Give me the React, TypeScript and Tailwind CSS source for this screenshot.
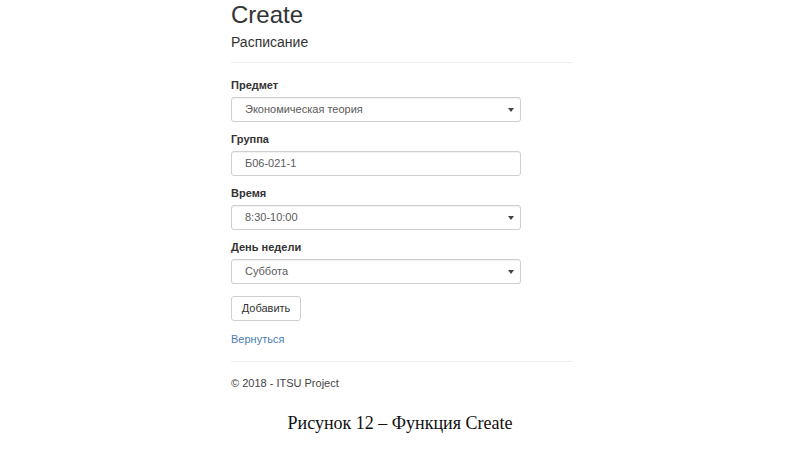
import React from "react";

function Caret() {
  return (
    <svg width="6" height="4" viewBox="0 0 6 4" className="shrink-0">
      <path d="M0 0 H6 L3 4 Z" fill="#444" />
    </svg>
  );
}

function SelectBox({ value }: { value: string }) {
  return (
    <div className="mt-[4px] flex h-[25px] w-[290px] items-center justify-between rounded-[3px] border border-[#cfcfcf] bg-white pl-[13px] pr-[6px] text-[11px] leading-[15px] text-[#5a5a5a] shadow-[inset_0_1px_1px_rgba(0,0,0,0.06)]">
      <span>{value}</span>
      <Caret />
    </div>
  );
}

function InputBox({ value }: { value: string }) {
  return (
    <div className="mt-[4px] flex h-[25px] w-[290px] items-center rounded-[3px] border border-[#cfcfcf] bg-white pl-[13px] text-[11px] leading-[15px] text-[#5a5a5a] shadow-[inset_0_1px_1px_rgba(0,0,0,0.06)]">
      <span>{value}</span>
    </div>
  );
}

function Label({ children }: { children: React.ReactNode }) {
  return <div className="h-[15px] text-[11px] font-bold leading-[15px] text-[#333]">{children}</div>;
}

export default function App() {
  return (
    <div className="h-[450px] w-[800px] overflow-hidden bg-white font-['Liberation_Sans',Arial,sans-serif]">
      <div className="ml-[231px] w-[342px]">
        <h2 className="mt-[1px] text-[24px] leading-[28px] text-[#333]">Create</h2>
        <h4 className="mt-[3px] text-[14px] leading-[20px] text-[#333]">Расписание</h4>
        <div className="mt-[10px] border-t border-[#eeeeee]" />
        <div className="mt-[15px] flex flex-col">
          <div className="mb-[10px]">
            <Label>Предмет</Label>
            <SelectBox value="Экономическая теория" />
          </div>
          <div className="mb-[10px]">
            <Label>Группа</Label>
            <InputBox value="Б06-021-1" />
          </div>
          <div className="mb-[10px]">
            <Label>Время</Label>
            <SelectBox value="8:30-10:00" />
          </div>
          <div>
            <Label>День недели</Label>
            <SelectBox value="Суббота" />
          </div>
        </div>
        <div className="mt-[12px] flex h-[25px] w-[70px] items-center justify-center rounded-[3px] border border-[#cfcfcf] bg-white text-[11px] leading-[15px] text-[#333]">
          Добавить
        </div>
        <div className="mt-[11px] text-[11px] leading-[15px] text-[#4a7db0]">Вернуться</div>
        <div className="mt-[14px] border-t border-[#eeeeee]" />
        <div className="mt-[14px] text-[11px] leading-[15px] text-[#444]">© 2018 - ITSU Project</div>
      </div>
      <div className="mt-[22px] text-center font-['Liberation_Serif','Times_New_Roman',serif] text-[18px] leading-[20px] text-[#111]">
        Рисунок 12 – Функция Create
      </div>
    </div>
  );
}
